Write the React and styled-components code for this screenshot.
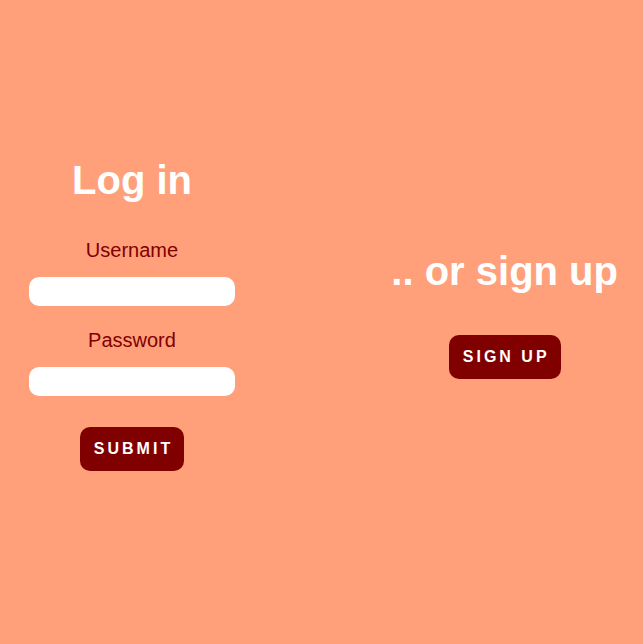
import React from "react";
import styled, { createGlobalStyle } from "styled-components";

const GlobalStyle = createGlobalStyle`
	html, body {
		margin: 0;
		padding: 0;
		background-color: #ffa07a;
		font-family: "Liberation Sans", Arial, sans-serif;
	}
`;

function App() {
	return (
		<>
			<GlobalStyle />
			<Page>
				<Column>
					<Heading>Log in</Heading>
					<Form onSubmit={(e) => e.preventDefault()}>
						<Label htmlFor="username">Username</Label>
						<Input id="username" type="text" />
						<Label htmlFor="password">Password</Label>
						<Input id="password" type="password" />
						<Button type="submit" $top="8px">Submit</Button>
					</Form>
				</Column>
				<Column>
					<Heading $gap="41px">.. or sign up</Heading>
					<Button type="button">Sign up</Button>
				</Column>
			</Page>
		</>
	);
}

export default App;

const Page = styled.div`
	height: 100vh;
	box-sizing: border-box;
	display: flex;
	justify-content: space-between;
	align-items: center;
	padding: 0 25px 16px 29px;
`;

const Column = styled.div`
	display: flex;
	flex-direction: column;
	align-items: center;
`;

const Heading = styled.h1`
	margin: 0 0 ${(props) => props.$gap || "36px"};
	font-size: 40px;
	font-weight: bold;
	color: white;
	white-space: nowrap;
`;

const Form = styled.form`
	display: flex;
	flex-direction: column;
	align-items: center;
`;

const Label = styled.label`
	font-size: 20px;
	color: #800000;
	margin-bottom: 15px;
`;

const Input = styled.input`
	width: 206px;
	height: 29px;
	box-sizing: border-box;
	border: none;
	border-radius: 10px;
	background: white;
	margin-bottom: 23px;
	padding: 0 10px;
	outline: none;
`;

const Button = styled.button`
	margin-top: ${(props) => props.$top || "0"};
	height: 44px;
	padding: 0 11px 0 14px;
	border: none;
	border-radius: 10px;
	background-color: #800000;
	color: white;
	font-family: "Liberation Sans", Arial, sans-serif;
	font-size: 16px;
	font-weight: bold;
	letter-spacing: 3px;
	text-transform: uppercase;
	cursor: pointer;
`;
